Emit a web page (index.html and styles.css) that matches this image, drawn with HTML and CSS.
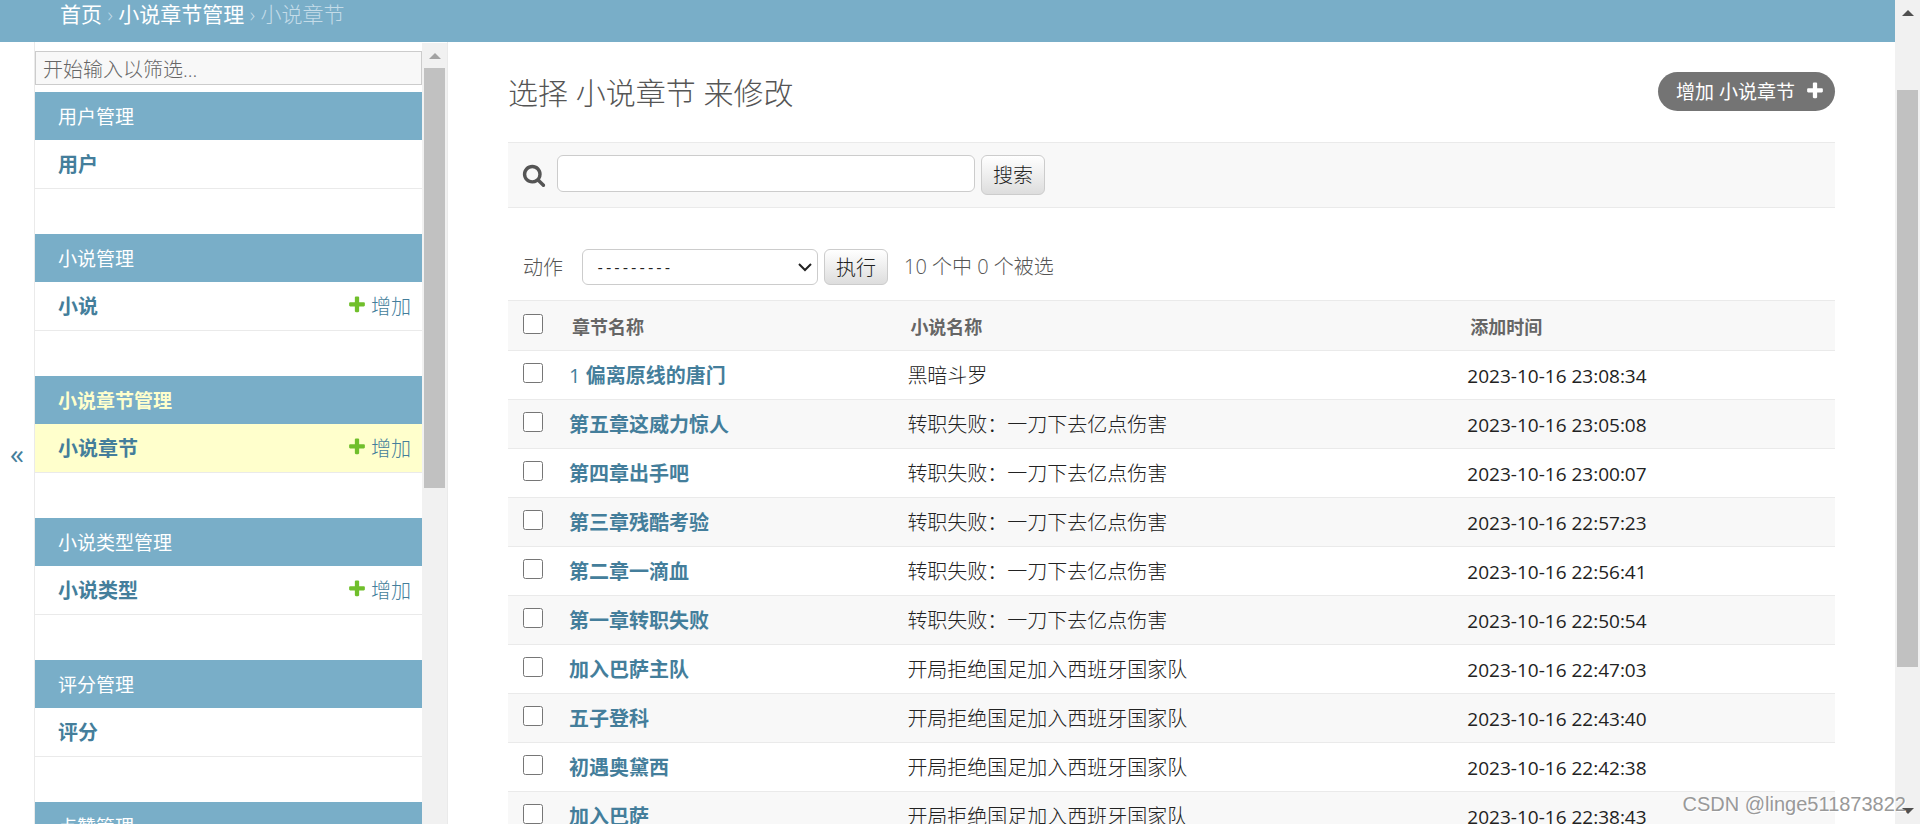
FILE: index.html
```html
<!DOCTYPE html>
<html lang="zh-CN">
<head>
<meta charset="utf-8">
<title>选择 小说章节 来修改</title>
<link rel="stylesheet" href="styles.css">
</head>
<body>
<svg class="defs" aria-hidden="true">
  <symbol id="plus" viewBox="0 0 1792 1792"><path d="M1600 736v192q0 40-28 68t-68 28h-416v416q0 40-28 68t-68 28h-192q-40 0-68-28t-28-68v-416h-416q-40 0-68-28t-28-68v-192q0-40 28-68t68-28h416v-416q0-40 28-68t68-28h192q40 0 68 28t28 68v416h416q40 0 68 28t28 68z"/></symbol>
  <symbol id="search" viewBox="0 0 1792 1792"><path d="M1216 832q0-185-131.5-316.5t-316.5-131.5-316.5 131.5-131.5 316.5 131.5 316.5 316.5 131.5 316.5-131.5 131.5-316.5zm512 832q0 52-38 90t-90 38q-54 0-90-38l-343-342q-179 124-399 124-143 0-273.5-55.5t-225-150-150-225-55.5-273.5 55.5-273.5 150-225 225-150 273.5-55.5 273.5 55.5 225 150 150 225 55.5 273.5q0 220-124 399l343 343q37 37 37 90z"/></symbol>
  <symbol id="up" viewBox="0 0 12 6"><path d="M0 6L6 0l6 6z"/></symbol>
</svg>
<div class="page">
  <nav class="breadcrumbs" aria-label="面包屑"><a href="#">首页</a> › <a href="#">小说章节管理</a> › 小说章节</nav>
  <div class="columns">
    <button class="toggle" type="button" aria-label="切换导航">«</button>
    <aside class="sidebar">
      <div class="nav">
        <input class="filter" type="search" placeholder="开始输入以筛选..." aria-label="筛选导航项目">
        <section class="module"><h2><a href="#">用户管理</a></h2><div class="model"><a class="name" href="#">用户</a></div></section>
        <section class="module"><h2><a href="#">小说管理</a></h2><div class="model"><a class="name" href="#">小说</a><a class="add" href="#"><svg class="plus"><use href="#plus"/></svg>增加</a></div></section>
        <section class="module current"><h2><a href="#">小说章节管理</a></h2><div class="model"><a class="name" href="#">小说章节</a><a class="add" href="#"><svg class="plus"><use href="#plus"/></svg>增加</a></div></section>
        <section class="module"><h2><a href="#">小说类型管理</a></h2><div class="model"><a class="name" href="#">小说类型</a><a class="add" href="#"><svg class="plus"><use href="#plus"/></svg>增加</a></div></section>
        <section class="module"><h2><a href="#">评分管理</a></h2><div class="model"><a class="name" href="#">评分</a></div></section>
        <section class="module"><h2><a href="#">点赞管理</a></h2></section>
      </div>
      <div class="scrollbar side"><svg class="arrow"><use href="#up"/></svg><div class="thumb"></div></div>
    </aside>
    <main class="content">
      <div class="heading">
        <h1>选择 小说章节 来修改</h1>
        <a class="addlink" href="#">增加 小说章节<svg class="plus"><use href="#plus"/></svg></a>
      </div>
      <form class="toolbar">
        <label for="searchbar"><svg class="glass" role="img" aria-label="搜索"><use href="#search"/></svg></label>
        <input id="searchbar" type="text">
        <button class="button" type="button">搜索</button>
      </form>
      <form>
        <div class="actions">
          <label for="action">动作</label>
          <div class="pick">
            <select id="action"><option>---------</option></select>
            <svg class="chevron" viewBox="0 0 14 9"><path d="M1 1l6 6 6-6"/></svg>
          </div>
          <button class="button" type="button">执行</button>
          <span class="counter">10 个中 0 个被选</span>
        </div>
        <table>
          <thead><tr><th class="check"><input type="checkbox" aria-label="全选"></th><th class="chapter">章节名称</th><th class="novel">小说名称</th><th>添加时间</th></tr></thead>
          <tbody>
            <tr><td><input type="checkbox" aria-label="选择"></td><td><a href="#"><span class="thin">1</span> 偏离原线的唐门</a></td><td>黑暗斗罗</td><td class="time">2023-10-16 23:08:34</td></tr>
            <tr><td><input type="checkbox" aria-label="选择"></td><td><a href="#">第五章这威力惊人</a></td><td>转职失败：一刀下去亿点伤害</td><td class="time">2023-10-16 23:05:08</td></tr>
            <tr><td><input type="checkbox" aria-label="选择"></td><td><a href="#">第四章出手吧</a></td><td>转职失败：一刀下去亿点伤害</td><td class="time">2023-10-16 23:00:07</td></tr>
            <tr><td><input type="checkbox" aria-label="选择"></td><td><a href="#">第三章残酷考验</a></td><td>转职失败：一刀下去亿点伤害</td><td class="time">2023-10-16 22:57:23</td></tr>
            <tr><td><input type="checkbox" aria-label="选择"></td><td><a href="#">第二章一滴血</a></td><td>转职失败：一刀下去亿点伤害</td><td class="time">2023-10-16 22:56:41</td></tr>
            <tr><td><input type="checkbox" aria-label="选择"></td><td><a href="#">第一章转职失败</a></td><td>转职失败：一刀下去亿点伤害</td><td class="time">2023-10-16 22:50:54</td></tr>
            <tr><td><input type="checkbox" aria-label="选择"></td><td><a href="#">加入巴萨主队</a></td><td>开局拒绝国足加入西班牙国家队</td><td class="time">2023-10-16 22:47:03</td></tr>
            <tr><td><input type="checkbox" aria-label="选择"></td><td><a href="#">五子登科</a></td><td>开局拒绝国足加入西班牙国家队</td><td class="time">2023-10-16 22:43:40</td></tr>
            <tr><td><input type="checkbox" aria-label="选择"></td><td><a href="#">初遇奥黛西</a></td><td>开局拒绝国足加入西班牙国家队</td><td class="time">2023-10-16 22:42:38</td></tr>
            <tr><td><input type="checkbox" aria-label="选择"></td><td><a href="#">加入巴萨</a></td><td>开局拒绝国足加入西班牙国家队</td><td class="time">2023-10-16 22:38:43</td></tr>
          </tbody>
        </table>
      </form>
    </main>
  </div>
</div>
<div class="scrollbar window"><svg class="arrow"><use href="#up"/></svg><div class="thumb"></div><svg class="arrow down"><use href="#up"/></svg></div>
<div class="watermark">CSDN @linge511873822</div>
</body>
</html>
```

FILE: styles.css
```css
* { box-sizing: border-box; }
body {
  margin: 0;
  height: 100vh;
  display: flex;
  overflow: hidden;
  background: #fff;
  color: #222;
  font: 300 20px/24px "Open Sans", "Noto Sans CJK SC", sans-serif;
}
a { color: #447e9b; text-decoration: none; }
h1, h2 { margin: 0; font-weight: 300; }
input, select, button { font: inherit; color: inherit; margin: 0; }
.defs { position: absolute; width: 0; height: 0; }
.page { flex: 1; min-width: 0; display: flex; flex-direction: column; }
.breadcrumbs {
  flex: none;
  padding: 0 60px 14px;
  background: #79aec8;
  color: #c4dce8;
  font-size: 21px;
  line-height: 28px;
}
.breadcrumbs a { color: #fff; font-weight: 400; }
.columns { flex: 1; min-height: 0; display: flex; }
.toggle {
  flex: none;
  width: 35px;
  padding: 40px 0 0;
  border: 0;
  border-right: 1px solid #eaeaea;
  background: #fff;
  color: #447e9b;
  font-size: 28px;
  font-weight: 400;
}
.sidebar { flex: none; width: 413px; display: flex; overflow: hidden; border-right: 1px solid #eaeaea; }
.nav { flex: 1; padding-top: 9px; }
.filter {
  display: block;
  width: 100%;
  height: 34px;
  margin-bottom: 7px;
  padding: 2px 7px 0;
  border: 1px solid #ccc;
  border-radius: 0;
  outline: 0;
  background: #f8f8f8;
  appearance: none;
}
.filter::placeholder { color: #666; opacity: 1; }
.module { margin-bottom: 45px; }
.module h2 { padding: 13px 23px 11px; background: #79aec8; font-size: 19px; }
.module h2 a { color: #fff; font-weight: 400; }
.model {
  display: flex;
  justify-content: space-between;
  padding: 13px 11px 11px 23px;
  border-bottom: 1px solid #eaeaea;
}
.name { font-weight: 700; }
.add { display: flex; gap: 4px; }
.plus { width: 20px; height: 20px; fill: #70bf2b; }
.current h2 a { color: #ffc; font-weight: 700; }
.current .model { background: #ffc; }

.scrollbar {
  flex: none;
  width: 25px;
  display: flex;
  flex-direction: column;
  align-items: center;
  padding: 10px 2px;
  background: #f1f1f1;
}
.scrollbar .thumb { width: 21px; background: #c1c1c1; }
.arrow { flex: none; width: 12px; height: 6px; fill: #505050; }
.side { margin-top: 1px; }
.side .arrow { fill: #a3a3a3; }
.side .thumb { height: 55.2%; margin-top: 9px; }
.window .thumb { height: 71.8%; margin-top: 74px; }
.down { margin-top: auto; transform: rotate(180deg); }

.content { flex: 1; min-width: 0; padding: 30px 60px 0; }
.heading { display: flex; justify-content: space-between; align-items: flex-start; height: 70px; }
h1 { font-size: 30px; line-height: 42px; color: #555; }
.addlink {
  display: flex;
  align-items: center;
  gap: 10px;
  height: 39px;
  padding: 0 10px 0 18px;
  border-radius: 20px;
  background: #747474;
  color: #fff;
  font-size: 19px;
  font-weight: 400;
}
.addlink .plus { fill: #fff; margin-bottom: 2px; }
.toolbar {
  display: flex;
  align-items: flex-start;
  gap: 6px;
  padding: 12px 14px;
  margin-bottom: 41px;
  border: solid #eaeaea;
  border-width: 1px 0;
  background: #f8f8f8;
}
.glass { display: block; width: 24px; height: 24px; margin: 8px 5px 0 0; fill: #555; }
.toolbar input {
  width: 418px;
  height: 37px;
  padding: 3px 8px;
  border: 1px solid #ccc;
  border-radius: 6px;
  background: #fff;
}
.button {
  height: 40px;
  padding: 2px 11px 0;
  border: 1px solid #ccc;
  border-radius: 6px;
  background: linear-gradient(#fff, #ddd);
  color: #222;
}
.actions {
  display: flex;
  align-items: center;
  gap: 6px;
  height: 36px;
  margin-bottom: 15px;
  padding-left: 15px;
  color: #555;
}
.actions label { padding-top: 2px; }
.actions .button { height: 36px; }
.pick { position: relative; margin-left: 13px; }
.pick select {
  display: block;
  width: 236px;
  height: 36px;
  padding: 3px 13px 0;
  border: 1px solid #ccc;
  border-radius: 6px;
  background: #fff;
  color: #222;
  font: 400 14px/24px "Liberation Mono", monospace;
  appearance: none;
}
.chevron {
  position: absolute;
  right: 6px;
  top: 14px;
  width: 14px;
  height: 9px;
  fill: none;
  stroke: #222;
  stroke-width: 2;
  pointer-events: none;
}
.counter { margin-left: 10px; }
table { width: 100%; border-collapse: collapse; table-layout: fixed; border-top: 1px solid #eaeaea; }
th, td { height: 49px; padding: 2px 12px 0; text-align: left; white-space: nowrap; border-bottom: 1px solid #eaeaea; }
th { height: 50px; padding-left: 15px; background: #f8f8f8; color: #666; font-size: 18px; font-weight: 700; }
.check { width: 49px; }
.chapter { width: 25.5%; }
.novel { width: 42.2%; }
td:first-child { padding: 1px 0 0 15px; }
tbody tr:nth-child(even) { background: #f8f8f8; }
td a { font-weight: 700; }
.thin { font-weight: 400; }
.time { font-size: 19px; font-weight: 400; }
table input { display: block; width: 20px; height: 20px; margin-bottom: 6px; }
.watermark {
  position: absolute;
  right: 14px;
  bottom: 8px;
  color: #999;
  font: 400 20px/24px "Liberation Sans", Arial, sans-serif;
  text-shadow: 1px 1px 0 #fff;
}
```
